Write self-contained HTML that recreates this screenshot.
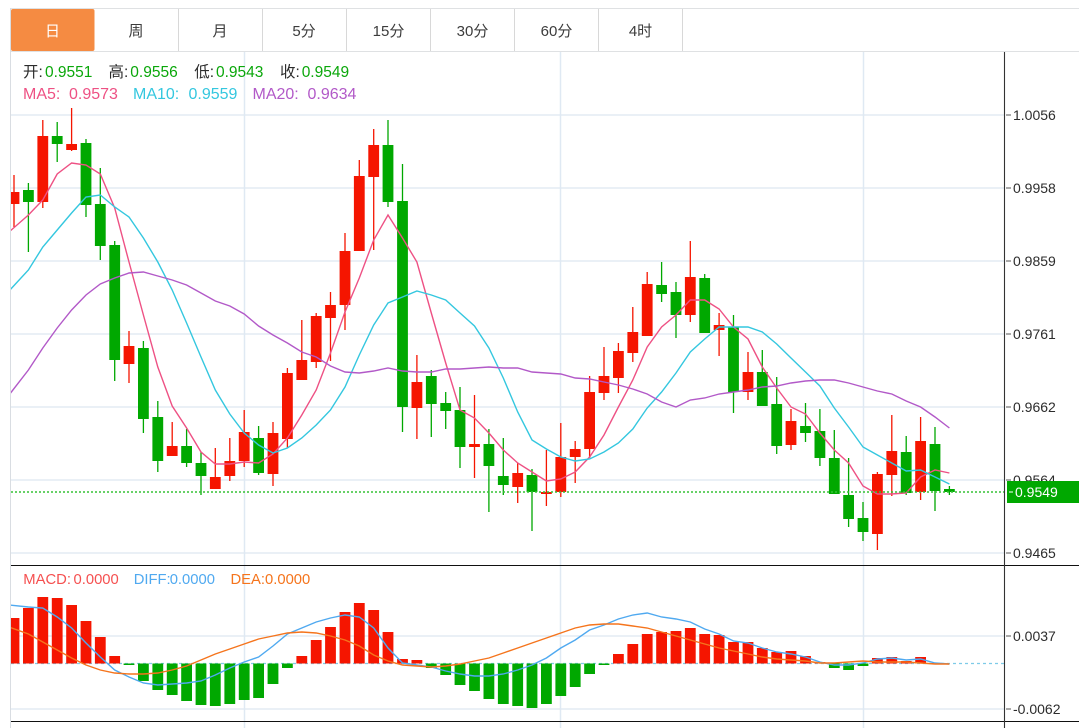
<!DOCTYPE html>
<html lang="zh-CN">
<head>
<meta charset="utf-8">
<title>K线图</title>
<style>
html,body{margin:0;padding:0;background:#fff;width:1079px;height:728px;overflow:hidden}
svg{display:block;position:absolute;left:0;top:0}
text{font-family:"Liberation Sans","Noto Sans CJK SC",sans-serif}
.tab{font-size:15px;fill:#3c3c3c;text-anchor:middle}
.ax{font-size:14px;fill:#2c2c2c}
.hd{font-size:15.5px;fill:#2c2c2c}
.v{font-size:15.5px;fill:#0aa70a}
.ma{font-size:16px}
.m{font-size:14.8px}
</style>
</head>
<body>
<svg width="1079" height="728" viewBox="0 0 1079 728" xmlns="http://www.w3.org/2000/svg">
<defs><clipPath id="c"><rect x="11" y="52" width="993" height="676"/></clipPath></defs>
<rect width="1079" height="728" fill="#fff"/>

<!-- tabs -->
<path d="M10 8.5H1079M11 51.5H1079" stroke="#dfe1e3" stroke-width="1" fill="none"/>
<path d="M10.5 8V728" stroke="#d9dde2" stroke-width="1"/>
<path d="M178.5 9V51M262.5 9V51M346.5 9V51M430.5 9V51M514.5 9V51M598.5 9V51M682.5 9V51" stroke="#d8d8d8" stroke-width="1"/>
<rect x="11" y="9" width="83.5" height="42" rx="2" fill="#f58b42"/>
<text class="tab" x="52.5" y="36" style="fill:#fff">日</text>
<text class="tab" x="136" y="36">周</text>
<text class="tab" x="220" y="36">月</text>
<text class="tab" x="304" y="36">5分</text>
<text class="tab" x="388.5" y="36">15分</text>
<text class="tab" x="472.5" y="36">30分</text>
<text class="tab" x="556.5" y="36">60分</text>
<text class="tab" x="640.5" y="36">4时</text>

<!-- grid -->
<path d="M11 115H1004M11 188H1004M11 261H1004M11 334H1004M11 407H1004M11 480H1004M11 553H1004M11 636H1004M11 709H1004" stroke="#e3ebf3" stroke-width="1.4" fill="none"/>
<path d="M244.5 52V728M560.5 52V728M863.5 52V728" stroke="#dfe9f3" stroke-width="1.5" fill="none"/>

<g clip-path="url(#c)">
<!-- candles -->
<path fill="none" stroke="#f51500" stroke-width="1.3" d="M14 175V227M42.8 120V208M71.6 108V151M129 331V383M172.2 422V456M215.3 448V489M229.8 438V481M244.2 410V467M273 422V486M287.4 368V448M301.8 320V380M316.2 313V368M330.5 292V361M345 233V330M359.3 160V251M373.7 129V250M416.9 355V439M474.5 395V478M517.7 463V503M546.4 450V506M560.8 423V497M575.2 441V483M589.6 376V458M604 347V400M618.4 343V393M632.8 307V362M647.2 272V336M690.3 241V322M719.1 313V356M748 352V400M791 409V450M877.4 472V550M891.8 415V496M920.6 417V500"/>
<path fill="none" stroke="#f51500" stroke-width="10.8" d="M14 192V204M42.8 136V202M71.6 144V150M129 346V364M172.2 446V456M215.3 477V489M229.8 461V476M244.2 432V461M273 433V474M287.4 373V439M301.8 360V380M316.2 316V362M330.5 305V318M345 251V305M359.3 176V251M373.7 145V177M416.9 382V408M474.5 444V447M517.7 473V487M546.4 492V494M560.8 457V492M575.2 449V457M589.6 392V449M604 376V393M618.4 351V378M632.8 332V353M647.2 284V336M690.3 277V315M719.1 325V330M748 372V392M791 421V445M877.4 474V534M891.8 451V475M920.6 441V492"/>
<path fill="none" stroke="#00a800" stroke-width="1.3" d="M28.4 183V252M57.2 122V162M86 139V217M100.3 168V260M114.7 241V381M143.4 341V433M157.8 401V472M186.6 429V467M201 452V495M258.6 426V475M388 120V207M402.5 164V432M431.3 370V437M445.7 392V429M460 387V468M488.9 429V512M503.3 438V495M532 469V531M661.6 262V302M676 282V338M704.7 274V333M733.5 315V413M762.3 350V406M776.7 377V454M805.5 403V442M819.9 409V466M834.3 430V494M848.6 458V527M863 502V541M906.2 436V495M935 427V511M949.4 486V495"/>
<path fill="none" stroke="#00a800" stroke-width="10.8" d="M28.4 190V202M57.2 136V144M86 143V205M100.3 204V246M114.7 245V360M143.4 348V419M157.8 417V461M186.6 446V463M201 463V476M258.6 438V473M388 145V202M402.5 201V407M431.3 376V404M445.7 403V411M460 410V447M488.9 444V466M503.3 476V485M532 475V492M661.6 285V294M676 292V315M704.7 278V333M733.5 327V392M762.3 372V406M776.7 404V446M805.5 426V433M819.9 431V458M834.3 458V494M848.6 495V519M863 518V532M906.2 452V493M935 444V491M949.4 489V492"/>

<!-- MA lines -->
<polyline fill="none" stroke="#ee5184" stroke-width="1.4" points="9,232 28.4,215 42.8,200 57.2,174 71.6,163 86,165 100.3,174 114.7,208 129,262 143.4,315 157.8,367 172.2,406 186.6,428 201,452 215.3,464 229.8,464 244.2,462 258.6,463 273,454 287.4,438 301.8,415 316.2,390 330.5,353 345,312 359.3,278 373.7,240 388,215 402.5,238 416.9,262 431.3,313 445.7,363 460,410 474.5,418 488.9,433 503.3,450 517.7,463 532,472 546.4,481 560.8,479 575.2,472 589.6,457 604,435 618.4,407 632.8,380 647.2,347 661.6,327 676,315 690.3,300 704.7,300 719.1,309 733.5,327 748,339 762.3,367 776.7,388 791,407 805.5,414 819.9,433 834.3,450 848.6,463 863,486 877.4,494 891.8,494 906.2,493 920.6,477 935,470 949.4,473"/>
<polyline fill="none" stroke="#34c7df" stroke-width="1.4" points="9,291 28.4,270 42.8,247 57.2,230 71.6,213 86,197 100.3,195 114.7,207 129,217 143.4,238 157.8,262 172.2,290 186.6,323 201,357 215.3,390 229.8,414 244.2,433 258.6,445 273,453 287.4,448 301.8,438 316.2,425 330.5,410 345,387 359.3,355 373.7,325 388,303 402.5,297 416.9,291 431.3,295 445.7,300 460,313 474.5,326 488.9,348 503.3,378 517.7,412 532,440 546.4,449 560.8,457 575.2,461 589.6,459 604,452 618.4,443 632.8,429 647.2,408 661.6,392 676,373 690.3,352 704.7,339 719.1,327 733.5,327 748,327 762.3,332 776.7,344 791,358 805.5,372 819.9,386 834.3,408 848.6,427 863,447 877.4,455 891.8,463 906.2,471 920.6,470 935,477 949.4,484"/>
<polyline fill="none" stroke="#b259c8" stroke-width="1.4" points="9,395 28.4,370 42.8,348 57.2,328 71.6,310 86,295 100.3,284 114.7,278 129,273 143.4,272 157.8,276 172.2,280 186.6,285 201,293 215.3,301 229.8,306 244.2,314 258.6,326 273,335 287.4,343 301.8,352 316.2,357 330.5,366 345,372 359.3,373 373.7,371 388,368 402.5,371 416.9,372 431.3,372 445.7,369 460,369 474.5,368 488.9,367 503.3,368 517.7,368 532,372 546.4,373 560.8,374 575.2,378 589.6,379 604,382 618.4,385 632.8,389 647.2,394 661.6,402 676,407 690.3,400 704.7,398 719.1,394 733.5,392 748,390 762.3,387 776.7,386 791,383 805.5,381 819.9,380 834.3,380 848.6,383 863,387 877.4,391 891.8,394 906.2,401 920.6,407 935,417 949.4,428"/>

<path d="M11 492H1004" stroke="#35c235" stroke-width="1.5" stroke-dasharray="2 2" fill="none"/>

<!-- MACD -->
<path d="M11 663.5H1004" stroke="#7ecbe8" stroke-width="1.2" stroke-dasharray="3 3" fill="none"/>
<path fill="none" stroke="#f51500" stroke-width="10.8" d="M14 618V663.5M28.4 608V663.5M42.8 597V663.5M57.2 598V663.5M71.6 605V663.5M86 621V663.5M100.3 637V663.5M114.7 656V663.5M301.8 656V663.5M316.2 640V663.5M330.5 627V663.5M345 612V663.5M359.3 603V663.5M373.7 610V663.5M388 632V663.5M402.5 659V663.5M416.9 660V663.5M618.4 654V663.5M632.8 644V663.5M647.2 634V663.5M661.6 632V663.5M676 631V663.5M690.3 628V663.5M704.7 634V663.5M719.1 635V663.5M733.5 642V663.5M748 642V663.5M762.3 648V663.5M776.7 652V663.5M791 651V663.5M805.5 656V663.5M819.9 662V663.5M877.4 658V663.5M891.8 657V663.5M906.2 661V663.5M920.6 657V663.5M935 663V663.5"/>
<path fill="none" stroke="#00a800" stroke-width="10.8" d="M129 663.5V665M143.4 663.5V681M157.8 663.5V690M172.2 663.5V695M186.6 663.5V701M201 663.5V705M215.3 663.5V706M229.8 663.5V704M244.2 663.5V700M258.6 663.5V698M273 663.5V684M287.4 663.5V668M431.3 663.5V668M445.7 663.5V675M460 663.5V685M474.5 663.5V691M488.9 663.5V699M503.3 663.5V704M517.7 663.5V706M532 663.5V708M546.4 663.5V704M560.8 663.5V696M575.2 663.5V687M589.6 663.5V674M604 663.5V665M834.3 663.5V668M848.6 663.5V670M863 663.5V666"/>
<polyline fill="none" stroke="#4fa9f0" stroke-width="1.4" points="9,605 28.4,607 42.8,608 57.2,617 71.6,628 86,643 100.3,657 114.7,670 129,677 143.4,683 157.8,685 172.2,684 186.6,683 201,681 215.3,675 229.8,668 244.2,662 258.6,657 273,646 287.4,634 301.8,628 316.2,622 330.5,618 345,615 359.3,617 373.7,628 388,648 402.5,663 416.9,665 431.3,667 445.7,671 460,674 474.5,676 488.9,676 503.3,674 517.7,670 532,665 546.4,658 560.8,648 575.2,640 589.6,630 604,625 618.4,619 632.8,615 647.2,613 661.6,617 676,619 690.3,622 704.7,629 719.1,634 733.5,641 748,643 762.3,648 776.7,652 791,654 805.5,657 819.9,662 834.3,665 848.6,665 863,663 877.4,659 891.8,658 906.2,660 920.6,659 935,663 949.4,664"/>
<polyline fill="none" stroke="#f5741c" stroke-width="1.4" points="9,627 28.4,634 42.8,642 57.2,650 71.6,658 86,665 100.3,670 114.7,673 129,674 143.4,674 157.8,673 172.2,670 186.6,666 201,660 215.3,654 229.8,649 244.2,644 258.6,639 273,636 287.4,633 301.8,632 316.2,633 330.5,636 345,640 359.3,646 373.7,655 388,661 402.5,665 416.9,666 431.3,667 445.7,666 460,664 474.5,661 488.9,658 503.3,653 517.7,648 532,643 546.4,638 560.8,633 575.2,628 589.6,625 604,624 618.4,624 632.8,626 647.2,628 661.6,632 676,636 690.3,640 704.7,644 719.1,648 733.5,651 748,654 762.3,657 776.7,659 791,660 805.5,661 819.9,663 834.3,663 848.6,662 863,661 877.4,662 891.8,662 906.2,662 920.6,663 935,664 949.4,664"/>
</g>

<!-- pane separators -->
<path d="M11 565.5H1079M11 721.5H1079" stroke="#111" stroke-width="1" fill="none"/>
<path d="M1004.5 52V728" stroke="#333" stroke-width="1.1"/>

<!-- axis ticks and labels -->
<path d="M1006 115H1011M1006 188H1011M1006 261H1011M1006 334H1011M1006 407H1011M1006 480H1011M1006 553H1011M1006 636H1011M1006 709H1011" stroke="#555" stroke-width="1"/>
<text class="ax" x="1013" y="120">1.0056</text>
<text class="ax" x="1013" y="193">0.9958</text>
<text class="ax" x="1013" y="266">0.9859</text>
<text class="ax" x="1013" y="339">0.9761</text>
<text class="ax" x="1013" y="412">0.9662</text>
<text class="ax" x="1013" y="485">0.9564</text>
<text class="ax" x="1013" y="558">0.9465</text>
<text class="ax" x="1013" y="641">0.0037</text>
<text class="ax" x="1013" y="714">-0.0062</text>

<rect x="1007" y="481" width="72" height="22" fill="#00a800"/>
<path d="M1009 492H1013" stroke="#fff" stroke-width="1"/>
<text x="1015" y="497" style="font-size:14px;fill:#fff">0.9549</text>

<!-- legends -->
<text class="hd" x="23" y="77">开:</text><text class="v" x="45" y="77">0.9551</text>
<text class="hd" x="108.5" y="77">高:</text><text class="v" x="130.3" y="77">0.9556</text>
<text class="hd" x="194.3" y="77">低:</text><text class="v" x="216" y="77">0.9543</text>
<text class="hd" x="280" y="77">收:</text><text class="v" x="301.7" y="77">0.9549</text>

<text class="ma" x="23" y="99" fill="#ee5184">MA5:</text><text class="ma" x="69" y="99" fill="#ee5184">0.9573</text>
<text class="ma" x="133" y="99" fill="#34c7df">MA10:</text><text class="ma" x="188.5" y="99" fill="#34c7df">0.9559</text>
<text class="ma" x="252.5" y="99" fill="#b259c8">MA20:</text><text class="ma" x="307.5" y="99" fill="#b259c8">0.9634</text>

<text class="m" x="23.3" y="584" fill="#f55050">MACD:</text><text class="m" x="73.5" y="584" fill="#f55050">0.0000</text>
<text class="m" x="133.7" y="584" fill="#4fa9f0">DIFF:</text><text class="m" x="169.7" y="584" fill="#4fa9f0">0.0000</text>
<text class="m" x="230.5" y="584" fill="#f5741c">DEA:</text><text class="m" x="265" y="584" fill="#f5741c">0.0000</text>
</svg>
</body>
</html>
